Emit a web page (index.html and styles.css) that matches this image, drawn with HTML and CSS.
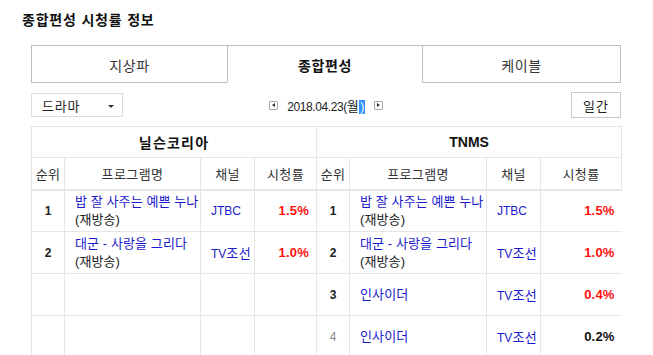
FILE: index.html
```html
<!DOCTYPE html>
<html lang="ko">
<head>
<meta charset="utf-8">
<link rel="stylesheet" href="styles.css">
</head>
<body>
<div class="page">
  <h1 class="title">종합편성 시청률 정보</h1>
  <div class="content">
    <div class="tabs">
      <div class="tab tab-first">지상파</div>
      <div class="tab tab-active">종합편성</div>
      <div class="tab tab-last">케이블</div>
    </div>
    <div class="controls">
      <div class="select"><span class="ko sel-text">드라마</span><span class="caret"></span></div>
      <div class="date">
        <span class="arrow-box"><span class="tri tri-left"></span></span>
        <span class="date-text">2018.04.23(<span class="ko">월</span><span class="sel">)</span></span>
        <span class="arrow-box"><span class="tri tri-right"></span></span>
      </div>
      <div class="btn-wrap"><div class="btn ko">일간</div></div>
    </div>
    <table class="rating">
      <colgroup>
        <col class="c-rank"><col class="c-prog"><col class="c-ch"><col class="c-rate-l">
        <col class="c-rank"><col class="c-prog2"><col class="c-ch"><col class="c-rate-r">
      </colgroup>
      <tr class="head1">
        <th colspan="4" class="kohead">닐슨코리아</th>
        <th colspan="4">TNMS</th>
      </tr>
      <tr class="head2">
        <td class="ko">순위</td><td class="ko">프로그램명</td><td class="ko">채널</td><td class="ko">시청률</td>
        <td class="ko">순위</td><td class="ko">프로그램명</td><td class="ko">채널</td><td class="ko">시청률</td>
      </tr>
      <tr class="row">
        <td class="rank">1</td>
        <td class="prog"><span class="pname ko">밥 잘 사주는 예쁜 누나</span><br><span class="re ko">(재방송)</span></td>
        <td class="ch">JTBC</td>
        <td class="rate">1.5%</td>
        <td class="rank">1</td>
        <td class="prog"><span class="pname ko">밥 잘 사주는 예쁜 누나</span><br><span class="re ko">(재방송)</span></td>
        <td class="ch">JTBC</td>
        <td class="rate end">1.5%</td>
      </tr>
      <tr class="row">
        <td class="rank">2</td>
        <td class="prog"><span class="pname ko">대군 - 사랑을 그리다</span><br><span class="re ko">(재방송)</span></td>
        <td class="ch">TV<span class="ko">조선</span></td>
        <td class="rate">1.0%</td>
        <td class="rank">2</td>
        <td class="prog"><span class="pname ko">대군 - 사랑을 그리다</span><br><span class="re ko">(재방송)</span></td>
        <td class="ch">TV<span class="ko">조선</span></td>
        <td class="rate end">1.0%</td>
      </tr>
      <tr class="row">
        <td></td><td></td><td></td><td></td>
        <td class="rank">3</td>
        <td class="prog"><span class="pname ko">인사이더</span></td>
        <td class="ch">TV<span class="ko">조선</span></td>
        <td class="rate end">0.4%</td>
      </tr>
      <tr class="row">
        <td></td><td></td><td></td><td></td>
        <td class="rank dim">4</td>
        <td class="prog"><span class="pname ko">인사이더</span></td>
        <td class="ch">TV<span class="ko">조선</span></td>
        <td class="rate end black">0.2%</td>
      </tr>
    </table>
  </div>
</div>
</body>
</html>
```

FILE: styles.css
```css
* { box-sizing: border-box; }
html, body { margin: 0; padding: 0; background: #fff; }
body {
  font-family: "Liberation Sans", "Noto Sans CJK KR", sans-serif;
  font-size: 12px;
  color: #222;
}
.ko { font-size: 13px; letter-spacing: 0.4px; }
.page { padding: 11px 0 0 22px; }
.title {
  margin: 0;
  font-size: 14px;
  letter-spacing: 0.8px;
  line-height: 18px;
  font-weight: bold;
  color: #111;
}
.content { margin: 16px 0 0 9px; width: 590px; }

.tabs { display: flex; height: 38px; }
.tab {
  flex: 1;
  display: flex;
  align-items: center;
  justify-content: center;
  font-size: 14px;
  letter-spacing: 0.6px;
  color: #333;
  border: 1px solid #bdbdbd;
  padding-top: 1px;
}
.tab-first { border-right: none; }
.tab-last { border-left: none; flex: 0 0 198px; }
.tab-active {
  flex: 0 0 196px;
  border-bottom-color: transparent;
  font-weight: bold;
  color: #111;
}

.controls {
  display: grid;
  grid-template-columns: 1fr auto 1fr;
  align-items: center;
  height: 43px;
  padding-top: 1px;
}
.select {
  width: 92px;
  height: 24px;
  border: 1px solid #dcdcdc;
  display: flex;
  align-items: center;
  justify-content: space-between;
  padding: 0 8px 0 10px;
  color: #222;
}
.sel-text { letter-spacing: 0.8px; }
.caret {
  width: 0; height: 0;
  border-left: 3px solid transparent;
  border-right: 3px solid transparent;
  border-top: 3px solid #333;
  margin-top: 2px;
}
.date { display: flex; align-items: center; gap: 9px; }
.date-text { letter-spacing: -0.4px; color: #222; }
.sel { background: #3390ff; color: #fff; padding: 0 1px; }
.arrow-box {
  width: 9px; height: 9px;
  border: 1px solid #a8a8a8;
  display: flex; align-items: center; justify-content: center;
  border-radius: 1px;
}
.tri { width: 0; height: 0; border-top: 2.5px solid transparent; border-bottom: 2.5px solid transparent; }
.tri-left { border-right: 3px solid #333; }
.tri-right { border-left: 3px solid #333; }
.btn-wrap { display: flex; justify-content: flex-end; }
.btn {
  width: 50px;
  height: 26px;
  border: 1px solid #c8c8d0;
  display: flex; align-items: center; justify-content: center;
  color: #222;
  letter-spacing: 1px;
}

.rating {
  width: 590px;
  border-collapse: collapse;
  table-layout: fixed;
  margin-top: 0;
}
.c-rank { width: 33px; }
.c-prog { width: 136px; }
.c-prog2 { width: 137px; }
.c-ch { width: 54px; }
.c-rate-l { width: 62px; }
.c-rate-r { width: 81px; }
.rating th, .rating td {
  border: 1px solid #e6e6e6;
  padding: 0;
}
.head1 th {
  height: 31px;
  font-weight: bold;
  font-size: 14px;
  color: #111;
  text-align: center;
}
.head1 th.kohead { letter-spacing: 1.2px; }
.head2 td {
  height: 32px;
  text-align: center;
  color: #333;
  border-bottom: 2px solid #e6e6e6;
}
.row td {
  height: 42px;
  vertical-align: middle;
}
.row td.end { border-right: none; }
.rank { text-align: center; font-weight: bold; color: #222; }
.rank.dim { font-weight: normal; color: #888; }
.prog {
  padding-left: 10px !important;
  line-height: 17px;
  white-space: nowrap;
  overflow: hidden;
}
.prog .ko { letter-spacing: 0.1px; }
.pname { color: #1a1acc; }
.re { color: #222; }
.ch { color: #1a1acc; padding-left: 10px !important; white-space: nowrap; }
.rate {
  text-align: right;
  font-weight: bold;
  font-size: 13px;
  color: #ff1010;
  padding-right: 7px !important;
  letter-spacing: 0.2px;
}
.rate.black { color: #111; }
```
